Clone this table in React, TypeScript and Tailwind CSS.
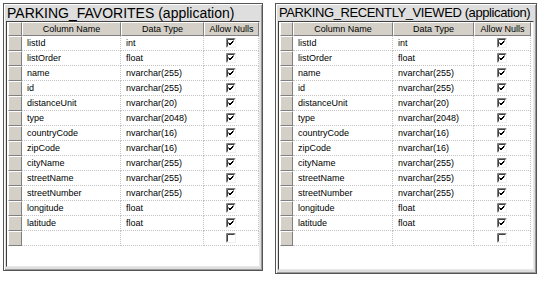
import React from "react";

type Col = { name: string; type: string; nulls: boolean };

const columns: Col[] = [
  { name: "listId", type: "int", nulls: true },
  { name: "listOrder", type: "float", nulls: true },
  { name: "name", type: "nvarchar(255)", nulls: true },
  { name: "id", type: "nvarchar(255)", nulls: true },
  { name: "distanceUnit", type: "nvarchar(20)", nulls: true },
  { name: "type", type: "nvarchar(2048)", nulls: true },
  { name: "countryCode", type: "nvarchar(16)", nulls: true },
  { name: "zipCode", type: "nvarchar(16)", nulls: true },
  { name: "cityName", type: "nvarchar(255)", nulls: true },
  { name: "streetName", type: "nvarchar(255)", nulls: true },
  { name: "streetNumber", type: "nvarchar(255)", nulls: true },
  { name: "longitude", type: "float", nulls: true },
  { name: "latitude", type: "float", nulls: true },
  { name: "", type: "", nulls: false },
];

const CheckBox = ({ checked }: { checked: boolean }) => (
  <svg width="10" height="10" viewBox="0 0 10 10" className="block">
    <rect x="0" y="0" width="10" height="10" fill="#fff" />
    <path d="M0.5 9.5V0.5H9.5" stroke="#808080" fill="none" />
    <path d="M1.5 8.5V1.5H8.5" stroke="#404040" fill="none" />
    <path d="M0.5 9.5H9.5V0.5" stroke="#f0f0f0" fill="none" />
    {checked && (
      <path d="M2.5 4.5L4 6L7.5 2.5M2.5 5.5L4 7L7.5 3.5" stroke="#000" strokeWidth="1" fill="none" />
    )}
  </svg>
);

const btn =
  "bg-[#d4d0c8] border-t border-l border-t-white border-l-white border-b border-r border-b-[#808080] border-r-[#808080]";

type Widths = { sel: string; name: string; type: string; nulls: string };

const Table = ({
  title,
  widths,
  titleClass,
  boxClass,
}: {
  title: string;
  widths: Widths;
  titleClass: string;
  boxClass: string;
}) => {
  return (
    <div
      className={`flex flex-col bg-[#dedede] border border-[#555] shadow-[inset_1px_1px_0_#fff,inset_-1px_-1px_0_#9a9a9a] ${boxClass}`}
    >
      <div className={`h-[17px] px-[3px] leading-[18px] text-black whitespace-nowrap ${titleClass}`}>
        {title}
      </div>
      <div className="flex-1 mx-[2px] mb-[3px] bg-white border-l border-t border-[#404040] border-r border-b border-r-[#e8e8e8] border-b-[#e8e8e8] pl-[1px] text-[9px] text-black font-['Liberation_Sans_Narrow','Liberation_Sans',sans-serif]">
        <div className="flex h-[14px]">
          <div className={`${widths.sel} ${btn}`} />
          <div className={`${widths.name} ${btn} text-center leading-[12px]`}>Column Name</div>
          <div className={`${widths.type} ${btn} text-center leading-[12px]`}>Data Type</div>
          <div className={`${widths.nulls} ${btn} text-center leading-[12px]`}>Allow Nulls</div>
        </div>
        {columns.map((c, i) => (
          <div key={i} className="flex h-[15px]">
            <div className={`${widths.sel} ${btn}`} />
            <div
              className={`${widths.name} pl-[5px] leading-[14px] border-r border-b border-dotted border-[#c4c4c4]`}
            >
              {c.name}
            </div>
            <div
              className={`${widths.type} pl-[5px] leading-[14px] border-r border-b border-dotted border-[#c4c4c4]`}
            >
              {c.type}
            </div>
            <div
              className={`${widths.nulls} flex items-center justify-center border-r border-b border-dotted border-[#c4c4c4]`}
            >
              <CheckBox checked={c.nulls} />
            </div>
          </div>
        ))}
      </div>
    </div>
  );
};

export default function App() {
  return (
    <div className="w-[540px] h-[281px] bg-white flex items-start gap-[12px] pl-[3px] pt-[3px] font-['Liberation_Sans',Arial,sans-serif]">
      <Table
        title="PARKING_FAVORITES (application)"
        titleClass="text-[14px]"
        boxClass="w-[260px] h-[268px]"
        widths={{ sel: "w-[14px]", name: "w-[99px]", type: "w-[83px]", nulls: "w-[55px]" }}
      />
      <Table
        title="PARKING_RECENTLY_VIEWED (application)"
        titleClass="text-[13px] tracking-[-0.4px]"
        boxClass="w-[262px] h-[271px]"
        widths={{ sel: "w-[13px]", name: "w-[100px]", type: "w-[81px]", nulls: "w-[57px]" }}
      />
    </div>
  );
}
